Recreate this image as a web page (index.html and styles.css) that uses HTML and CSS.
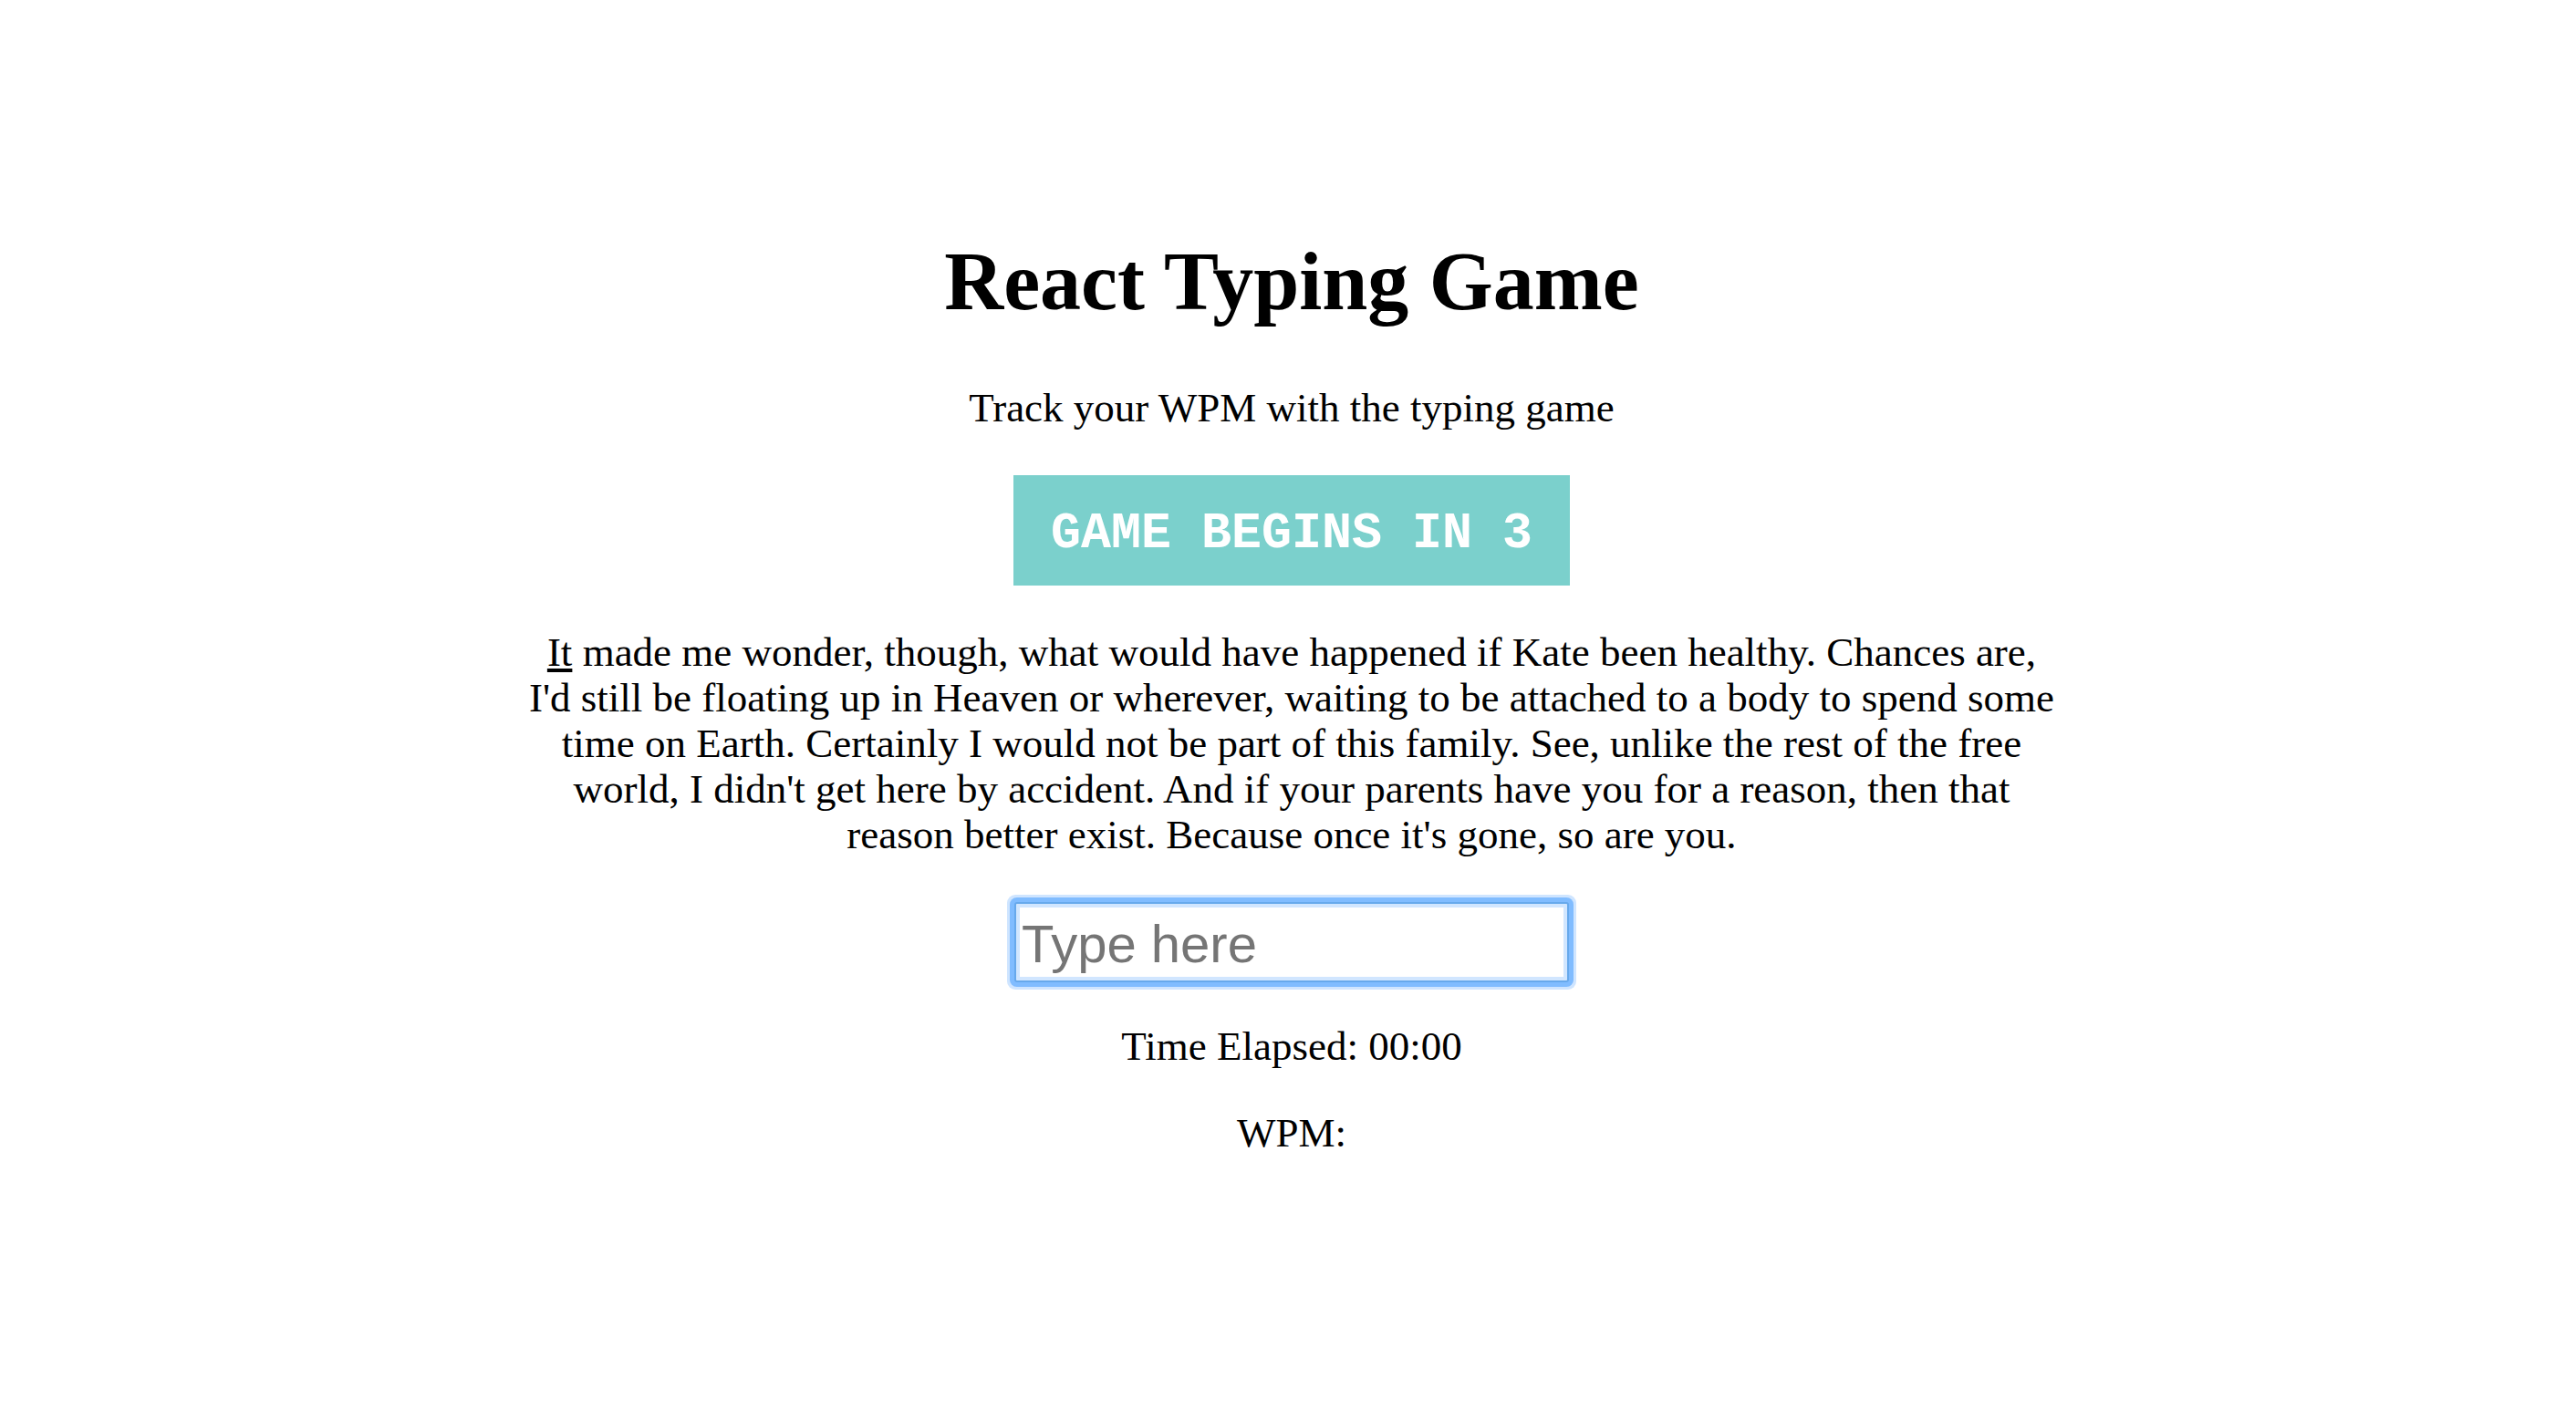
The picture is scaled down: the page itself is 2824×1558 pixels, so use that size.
FILE: index.html
```html
<!DOCTYPE html>
<html lang="en">
<head>
<meta charset="utf-8">
<meta name="viewport" content="width=device-width, initial-scale=1">
<title>React Typing Game</title>
<link rel="stylesheet" href="styles.css">
</head>
<body>
<main class="game">
<h1 class="title">React Typing Game</h1>
<p class="intro">Track your WPM with the typing game</p>
<button class="start" type="button">Game begins in 3</button>
<p class="passage"><span class="current">It</span> made me wonder, though, what would have happened if Kate been healthy. Chances are, I'd still be floating up in Heaven or wherever, waiting to be attached to a body to spend some time on Earth. Certainly I would not be part of this family. See, unlike the rest of the free world, I didn't get here by accident. And if your parents have you for a reason, then that reason better exist. Because once it's gone, so are you.</p>
<input class="entry" type="text" placeholder="Type here" aria-label="Type here">
<p class="stat">Time Elapsed: 00:00</p>
<p class="stat">WPM:</p>
</main>
</body>
</html>
```
FILE: styles.css
```css
* {
  box-sizing: border-box;
}

body {
  margin: 0;
  min-height: 100vh;
  background: #fff;
  color: #000;
  font: 45px/50px "Liberation Serif", "Times New Roman", serif;
}

.game {
  display: flex;
  flex-direction: column;
  align-items: center;
  width: 60%;
  margin: 0 auto;
  padding: 259px 0 0 8px;
  text-align: center;
}

.title {
  margin: 0 0 63px;
  font-size: 90px;
  line-height: 100px;
}

.intro {
  margin: 0 0 49px;
}

.start {
  margin: 0 0 48px;
  padding: 34px 41px 26px;
  border: 0;
  background: #7bd0cc;
  color: #fff;
  font: bold 55px/61px "Liberation Mono", "Courier New", monospace;
  text-transform: uppercase;
}

.passage {
  margin: 0 0 49px;
}

.entry {
  width: 608px;
  max-width: 100%;
  height: 88px;
  margin: 0 0 45px;
  padding: 3px 6px 0;
  border: 2px solid #67a9ec;
  border-radius: 3px;
  outline: 0;
  box-shadow: inset 0 0 0 4px #d1e6ff, 0 0 0 5px #80bcff, 0 0 0 8px #cfe5ff;
  font: 58px/72px "Liberation Sans", Arial, sans-serif;
}

.entry::placeholder {
  color: #757575;
}

.stat {
  margin: 0 0 45px;
}

.current {
  text-decoration: underline;
}
```
